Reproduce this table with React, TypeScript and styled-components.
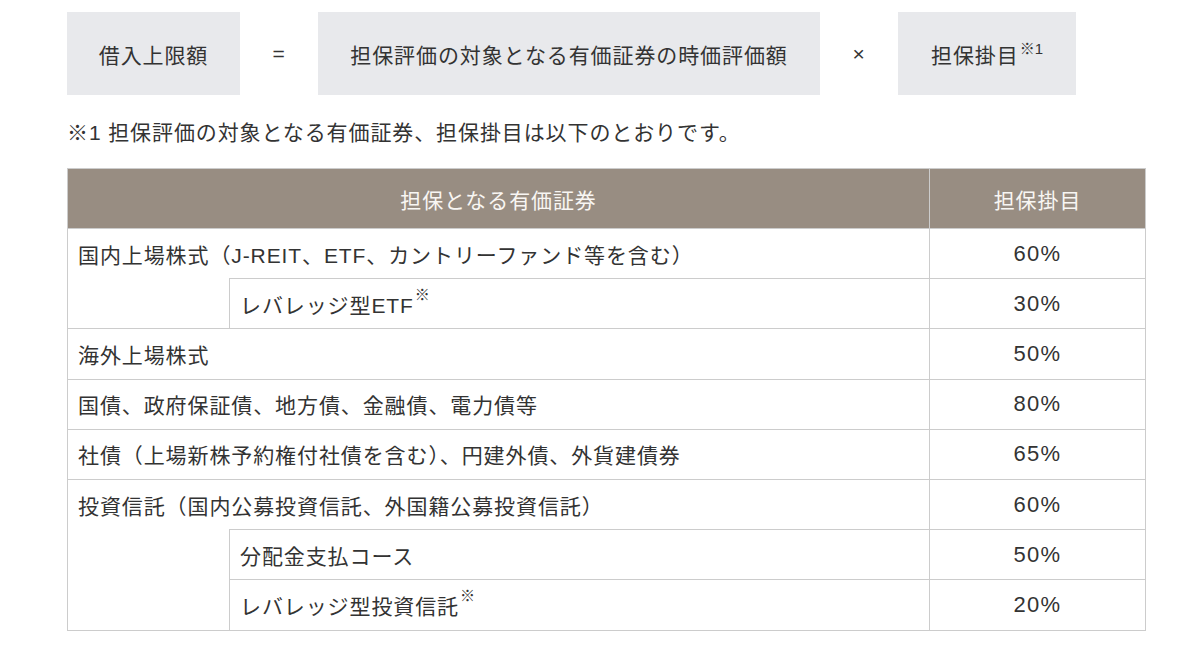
import styled, { createGlobalStyle } from 'styled-components';

const GlobalStyle = createGlobalStyle`
    body {
        margin: 0;
        background: #ffffff;
        color: #333333;
        font-family: 'Liberation Sans', 'Noto Sans CJK JP', sans-serif;
    }
`;

const Page = styled.div`
    width: 1079px;
    padding: 12px 0 0 67px;
    font-size: 21px;
    letter-spacing: 0.9px;
`;

const Formula = styled.div`
    display: flex;
    align-items: stretch;
    height: 83px;
`;

const Term = styled.div<{ $width: number }>`
    width: ${(p) => p.$width}px;
    background-color: #e8e9ec;
    display: flex;
    align-items: center;
    justify-content: center;
`;

const Operator = styled.div`
    width: 78px;
    display: flex;
    align-items: center;
    justify-content: center;
    font-size: 21px;
`;

const Sup = styled.sup<{ $size?: number }>`
    font-size: ${(p) => p.$size ?? 15}px;
    letter-spacing: 0;
    vertical-align: top;
    position: relative;
    top: -6px;
    margin-left: 1px;
`;

const Note = styled.p`
    margin: 0;
    height: 71px;
    display: flex;
    align-items: center;
    padding-bottom: 2px;
`;

const Table = styled.table`
    width: 1079px;
    border-collapse: collapse;
    table-layout: fixed;
`;

const Th = styled.th`
    height: 59px;
    background-color: #988d82;
    color: #f8f6f3;
    font-weight: normal;
    text-align: center;
    border: 1px solid #cccccc;
    padding: 0;
`;

const Td = styled.td<{ $center?: boolean; $blank?: boolean }>`
    height: 49.2px;
    border: 1px solid #cccccc;
    padding: 0 0 0 10px;
    text-align: left;
    ${(p) => (p.$blank ? 'border-top: hidden;' : '')}
    ${(p) => (p.$center ? 'padding: 0; text-align: center; font-size: 22px; letter-spacing: 1.3px;' : '')}
    white-space: nowrap;
`;

type Row = { label: string; rate: string; sub?: boolean; mark?: boolean };

const rows: Row[] = [
    { label: '国内上場株式（J-REIT、ETF、カントリーファンド等を含む）', rate: '60%' },
    { label: 'レバレッジ型ETF', rate: '30%', sub: true, mark: true },
    { label: '海外上場株式', rate: '50%' },
    { label: '国債、政府保証債、地方債、金融債、電力債等', rate: '80%' },
    { label: '社債（上場新株予約権付社債を含む）、円建外債、外貨建債券', rate: '65%' },
    { label: '投資信託（国内公募投資信託、外国籍公募投資信託）', rate: '60%' },
    { label: '分配金支払コース', rate: '50%', sub: true },
    { label: 'レバレッジ型投資信託', rate: '20%', sub: true, mark: true },
];

export default function App() {
    return (
        <Page>
            <GlobalStyle />
            <Formula>
                <Term $width={173}>借入上限額</Term>
                <Operator>=</Operator>
                <Term $width={502}>担保評価の対象となる有価証券の時価評価額</Term>
                <Operator>×</Operator>
                <Term $width={178}>
                    担保掛目<Sup>※1</Sup>
                </Term>
            </Formula>
            <Note>※1 担保評価の対象となる有価証券、担保掛目は以下のとおりです。</Note>
            <Table>
                <colgroup>
                    <col style={{ width: 162 }} />
                    <col style={{ width: 700 }} />
                    <col style={{ width: 216 }} />
                </colgroup>
                <thead>
                    <tr>
                        <Th colSpan={2}>担保となる有価証券</Th>
                        <Th>担保掛目</Th>
                    </tr>
                </thead>
                <tbody>
                    {rows.map((row) => (
                        <tr key={row.label}>
                            {row.sub ? (
                                <>
                                    <Td $blank />
                                    <Td>
                                        {row.label}
                                        {row.mark && <Sup $size={15}>※</Sup>}
                                    </Td>
                                </>
                            ) : (
                                <Td colSpan={2}>{row.label}</Td>
                            )}
                            <Td $center>{row.rate}</Td>
                        </tr>
                    ))}
                </tbody>
            </Table>
        </Page>
    );
}
